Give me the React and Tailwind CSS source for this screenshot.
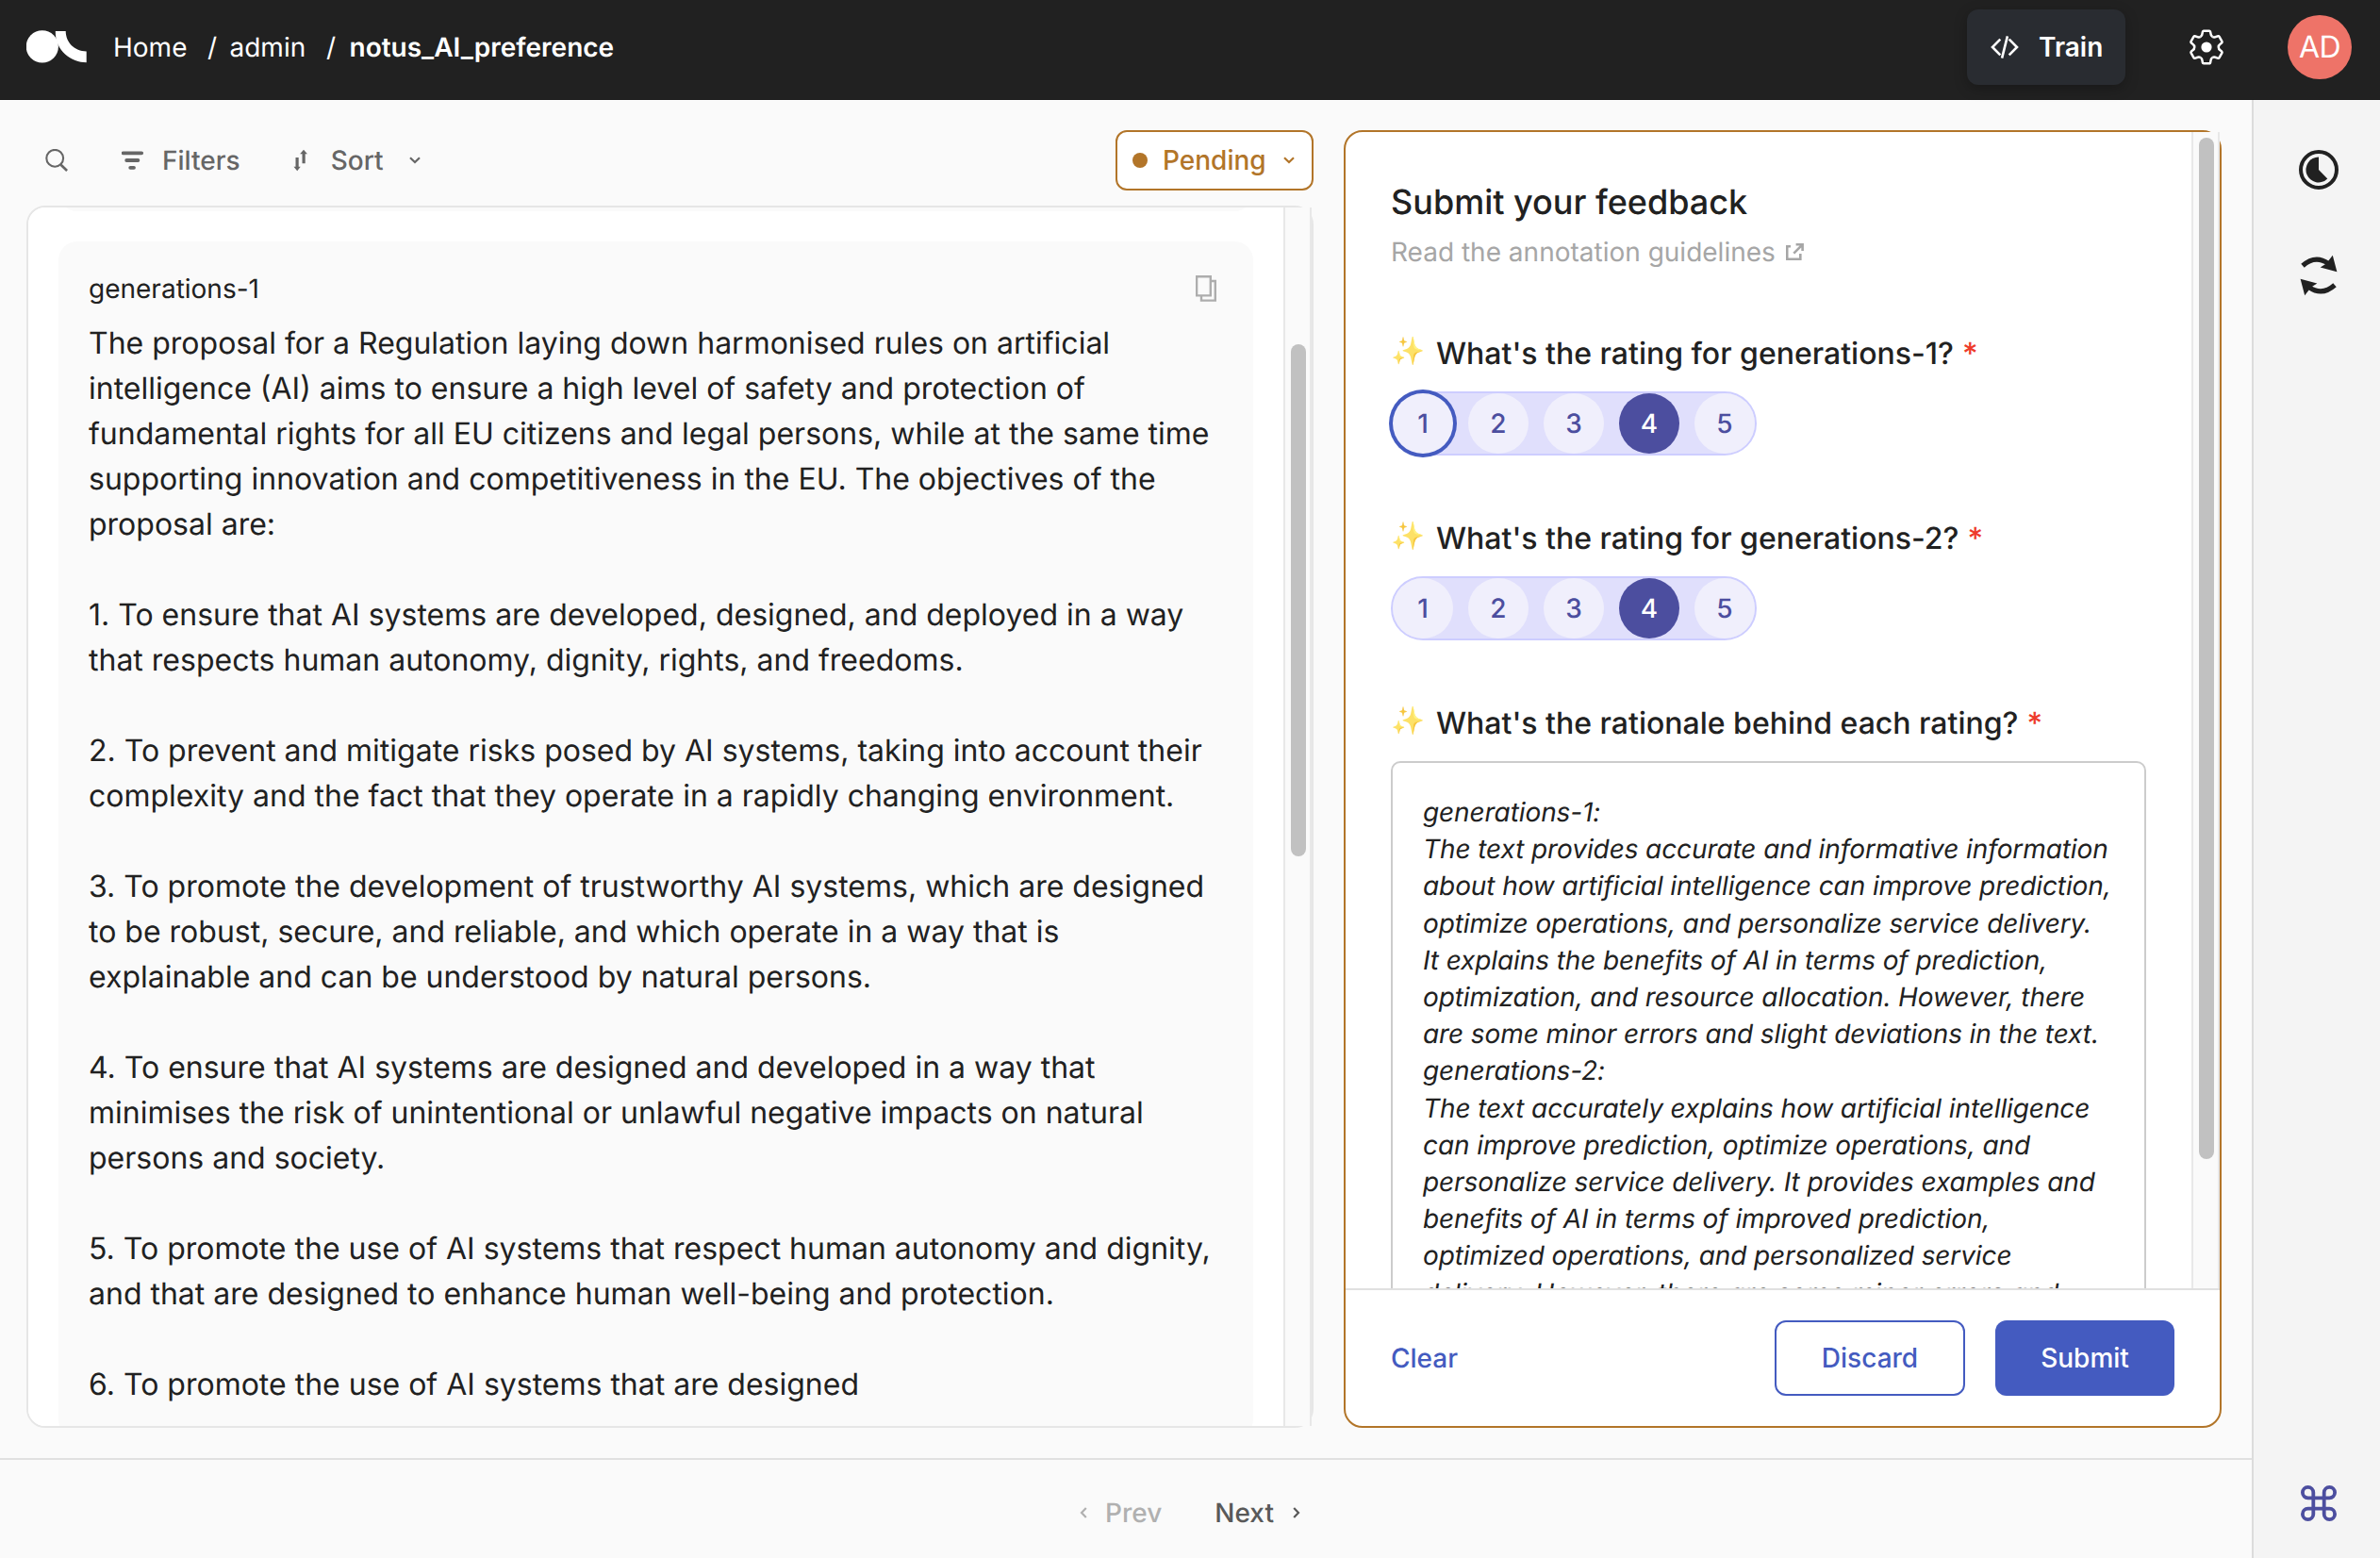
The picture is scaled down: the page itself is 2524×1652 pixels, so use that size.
import React from "react";

const paragraphs = [
  [
    "The proposal for a Regulation laying down harmonised rules on artificial",
    "intelligence (AI) aims to ensure a high level of safety and protection of",
    "fundamental rights for all EU citizens and legal persons, while at the same time",
    "supporting innovation and competitiveness in the EU. The objectives of the",
    "proposal are:",
  ],
  [
    "1. To ensure that AI systems are developed, designed, and deployed in a way",
    "that respects human autonomy, dignity, rights, and freedoms.",
  ],
  [
    "2. To prevent and mitigate risks posed by AI systems, taking into account their",
    "complexity and the fact that they operate in a rapidly changing environment.",
  ],
  [
    "3. To promote the development of trustworthy AI systems, which are designed",
    "to be robust, secure, and reliable, and which operate in a way that is",
    "explainable and can be understood by natural persons.",
  ],
  [
    "4. To ensure that AI systems are designed and developed in a way that",
    "minimises the risk of unintentional or unlawful negative impacts on natural",
    "persons and society.",
  ],
  [
    "5. To promote the use of AI systems that respect human autonomy and dignity,",
    "and that are designed to enhance human well-being and protection.",
  ],
  ["6. To promote the use of AI systems that are designed"],
];

const rationale = [
  "generations-1:",
  "The text provides accurate and informative information",
  "about how artificial intelligence can improve prediction,",
  "optimize operations, and personalize service delivery.",
  "It explains the benefits of AI in terms of prediction,",
  "optimization, and resource allocation. However, there",
  "are some minor errors and slight deviations in the text.",
  "generations-2:",
  "The text accurately explains how artificial intelligence",
  "can improve prediction, optimize operations, and",
  "personalize service delivery. It provides examples and",
  "benefits of AI in terms of improved prediction,",
  "optimized operations, and personalized service",
  "delivery. However, there are some minor errors and",
];

function Logo() {
  return (
    <svg className="mt-px h-9 w-16 shrink-0" viewBox="28 32 64 36" fill="#fff">
      <circle cx="44.8" cy="49.4" r="17.1" />
      <path d="M58.8 33H69.7C69.8 45 79 54.3 91.7 54.4V66.3C76 66 58.2 54 58.8 33Z" />
    </svg>
  );
}

function CodeIcon() {
  return (
    <svg className="h-6 w-[30px] shrink-0" viewBox="0 0 30 24" fill="none" stroke="#fff" strokeWidth="2.6">
      <path d="M10.3 3.6 2 12l8.3 8.4M19.7 3.6 28 12l-8.3 8.4M17.9.4 12.1 23.6" />
    </svg>
  );
}

const toothAngles = [0, 60, 120, 180, 240, 300];

function GearIcon() {
  return (
    <svg className="h-10 w-10 shrink-0" viewBox="-20 -20 40 40" fill="none" stroke="#fff" strokeWidth="2.5" strokeLinejoin="round">
      {toothAngles.map((a) => (
        <path
          key={a}
          transform={`rotate(${a})`}
          d="M-6.4-11C-4.8-11.9-4.5-13-4.4-14.6Q-4.2-17.3-2.8-17.3H2.8Q4.2-17.3 4.4-14.6C4.5-13 4.8-11.9 6.4-11"
        />
      ))}
      <circle r="5.6" fill="#fff" stroke="none" />
    </svg>
  );
}

function SearchIcon() {
  return (
    <svg className="h-6 w-6" viewBox="48 158 24 24" fill="none" stroke="#666">
      <circle cx="58.2" cy="167.8" r="8.9" strokeWidth="2.1" />
      <path d="m64.6 174.8 6.5 6.2" strokeWidth="2.7" />
    </svg>
  );
}

function FiltersIcon() {
  return (
    <svg className="h-6 w-6" viewBox="129 158 24 24" stroke="#666" strokeWidth="3.8" strokeLinecap="round">
      <path d="M130.6 162.3h19.6M134.2 170h12.2M138.2 177.8h3.8" />
    </svg>
  );
}

function SortIcon() {
  return (
    <svg className="h-6 w-4" viewBox="311.3 158 16 24" fill="#666">
      <path d="M322.3 158.7 326.3 163.2H324V173.3H320.8V163.2H318.4ZM315.5 181.2 311.8 176.8H313.8V167H317V176.8H319Z" />
    </svg>
  );
}

function Chevron({ className, d = "M1 1.2 6 6 11 1.2", box = "0 0 12 8", width = 2.2 }) {
  return (
    <svg className={className} viewBox={box} fill="none" stroke="currentColor" strokeWidth={width}>
      <path d={d} />
    </svg>
  );
}

function CopyIcon() {
  return (
    <svg className="h-7 w-[22px]" viewBox="0 0 22 28" fill="none" stroke="#adadad" strokeWidth="2.4">
      <path d="M1.1 1.3H15.8V21.4H1.1ZM6 21.4V26.6H20.8V6H15.8" />
    </svg>
  );
}

function ExternalIcon() {
  return (
    <svg className="h-[18px] w-[19px]" viewBox="0 0 19 18" fill="none" stroke="#a6a6a6" strokeWidth="2.6">
      <path d="M5 3.2H1.2V16.8H15.3V11M8.3 10.7 17 1.8M10.6 1.2H17.6V8" />
    </svg>
  );
}

function ThemeIcon() {
  return (
    <svg className="h-[42px] w-[42px]" viewBox="-21 -21 42 42">
      <circle r="19" fill="none" stroke="#212121" strokeWidth="4" />
      <path d="M0-13.4A13.4 13.4 0 1 0 9.3 9.5L0 0Z" fill="#212121" />
    </svg>
  );
}

function RefreshIcon() {
  const half = (
    <>
      <path d="M-17-10.3Q-3.5-22.3 10-12.6" fill="none" stroke="#212121" strokeWidth="5.2" />
      <path d="M14.8-21.2 19.4-3.8 1.7-8.6 8-12.6Z" fill="#212121" />
    </>
  );
  return (
    <svg className="h-[44px] w-[40px]" viewBox="-20 -22 40 44">
      <g>{half}</g>
      <g transform="rotate(180)">{half}</g>
    </svg>
  );
}

function CommandIcon() {
  return (
    <svg className="h-[38px] w-[38px]" viewBox="2 2 20 20" fill="none" stroke="#4c4e9f" strokeWidth="2">
      <path d="M15 6v12a3 3 0 1 0 3-3H6a3 3 0 1 0 3 3V6a3 3 0 1 0-3 3h12a3 3 0 1 0-3-3" />
    </svg>
  );
}

function Header() {
  return (
    <header className="flex h-[106px] items-start border-b border-[#1a1a1a] bg-[#212121] pl-7 pr-[30px] text-[28px] text-white">
      <div className="flex h-[99px] flex-1 items-center">
        <Logo />
        <nav className="flex items-center">
          <a className="ml-[28px] w-[100px]">Home</a>
          <span className="w-[23.5px]">/</span>
          <a className="w-[102.5px]">admin</a>
          <span className="w-[24.5px]">/</span>
          <span className="font-semibold">notus_AI_preference</span>
        </nav>
      </div>
      <div className="flex h-[100px] items-center">
        <button className="flex h-20 w-[168px] items-center rounded-[12px] bg-[#292c31] pl-[25px] font-semibold shadow-[0_4px_14px_rgba(0,0,0,0.25)]">
          <CodeIcon />
          <span className="ml-[21px]">Train</span>
        </button>
        <span className="ml-[66px]">
          <GearIcon />
        </span>
        <div className="ml-[66px] flex h-[68px] w-[68px] items-center justify-center rounded-full bg-[#ee7368] text-[32px] tracking-[-0.6px]">
          AD
        </div>
      </div>
    </header>
  );
}

function Toolbar() {
  return (
    <div className="flex h-16 items-center pl-5 text-[28px] font-medium text-[#666]">
      <SearchIcon />
      <span className="ml-[57px] flex items-center">
        <FiltersIcon />
        <span className="ml-[19px]">Filters</span>
      </span>
      <span className="ml-[56px] flex items-center">
        <SortIcon />
        <span className="ml-[24px]">Sort</span>
        <Chevron className="ml-[27.5px] h-2 w-3" />
      </span>
      <button className="ml-auto flex h-16 w-[210px] items-center rounded-[12px] border-2 border-[#b27529] bg-white pl-4 text-[#b27529]">
        <span className="h-4 w-4 rounded-full bg-[#b27529]" />
        <span className="ml-[16px]">Pending</span>
        <Chevron className="ml-[18px] h-2 w-3" />
      </button>
    </div>
  );
}

function Record() {
  return (
    <div className="mt-4 flex h-[1296px] rounded-[20px] border-2 border-[#e6e6e6] bg-white">
      <div className="min-w-0 flex-1 overflow-hidden rounded-l-[18px] bg-white px-8">
        <div className="-mt-9 h-10 rounded-[20px] bg-[#fafafa]" />
        <div className="mt-8 h-[1269px] rounded-[20px] bg-[#fafafa] pl-8 pr-[39px] pt-8 text-[#212121]">
          <div className="flex h-9 items-center justify-between text-[28px]">
            <span>generations-1</span>
            <CopyIcon />
          </div>
          <div className="mt-4 flex flex-col gap-12 whitespace-nowrap text-[32px] leading-[48px]">
            {paragraphs.map((lines, i) => (
              <p key={i}>
                {lines.map((line) => (
                  <span key={line} className="block">
                    {line}
                  </span>
                ))}
              </p>
            ))}
          </div>
        </div>
      </div>
      <div className="w-[30px] border-x-2 border-[#e8e8e8] bg-[#fafafa] pl-1.5">
        <div className="mt-[145px] h-[543px] w-4 rounded-full bg-[#c1c1c1]" />
      </div>
    </div>
  );
}

function Question({ children }) {
  return (
    <h3 className="flex h-10 items-center whitespace-nowrap text-[32px] font-medium leading-10">
      <span className="-mt-1.5 w-[48px] text-[29px] opacity-75">✨</span>
      <span>{children}</span>
      <span className="ml-[9px] text-[#ee3b2b]">*</span>
    </h3>
  );
}

function Rating({ focused }) {
  return (
    <div className="mt-5 flex h-[68px] w-[388px] gap-4 rounded-full border-2 border-[#cdcdff] bg-[#e0dffc]">
      {[1, 2, 3, 4, 5].map((n) => (
        <span
          key={n}
          className={
            "flex h-16 w-16 items-center justify-center rounded-full text-[28px] font-medium " +
            (n === 4 ? "bg-[#4c4e9f] text-white" : "bg-[#f0effc] text-[#4c4e9f]") +
            (focused && n === 1 ? " ring-4 ring-[#445bc0]" : "")
          }
        >
          {n}
        </span>
      ))}
    </div>
  );
}

function Feedback() {
  return (
    <section className="ml-8 flex h-[1376px] w-[931px] flex-col rounded-[20px] border-2 border-[#b27529] bg-white">
      <div className="flex h-[1226px] overflow-hidden rounded-tl-[18px]">
        <div className="flex-1 pl-12 pr-12 pt-[52px] text-[#212121]">
          <h2 className="h-11 text-[36px] font-medium leading-[44px]">Submit your feedback</h2>
          <p className="mt-[13px] flex h-9 items-center text-[28px] text-[#a6a6a6]">
            <span className="mr-[11px]">Read the annotation guidelines</span>
            <ExternalIcon />
          </p>
          <div className="mt-[70px]">
            <Question>What's the rating for generations-1?</Question>
            <Rating focused />
          </div>
          <div className="mt-[68px]">
            <Question>What's the rating for generations-2?</Question>
            <Rating />
          </div>
          <div className="mt-[68px]">
            <Question>What's the rationale behind each rating?</Question>
            <div className="mt-5 w-[801px] whitespace-nowrap rounded-[10px] border-2 border-[#ccc] pl-8 pt-[33px] text-[28px] italic leading-[39.2px] tracking-[-0.1px]">
              {rationale.map((line) => (
                <span key={line} className="block">
                  {line}
                </span>
              ))}
            </div>
          </div>
        </div>
        <div className="w-[30px] border-x-2 border-[#e8e8e8] bg-[#fafafa] pl-1.5">
          <div className="mt-1.5 h-[1083px] w-4 rounded-full bg-[#c1c1c1]" />
        </div>
      </div>
      <div className="flex flex-1 items-center border-t-2 border-[#e0e0e0] pl-12 pr-12 text-[28px] font-medium">
        <span className="flex-1 text-[#445bc0]">Clear</span>
        <button className="h-20 w-[202px] rounded-[12px] border-2 border-[#445bc0] text-[#445bc0]">Discard</button>
        <button className="ml-8 h-20 w-[190px] rounded-[12px] bg-[#445bc0] text-white">Submit</button>
      </div>
    </section>
  );
}

function Pagination() {
  return (
    <footer className="flex h-[106px] items-center border-t-2 border-[#e0e0e0] pl-[1145px] pt-2 text-[28px] font-medium text-[#b0b0b0]">
      <Chevron className="h-3 w-2" box="0 0 8 12" d="M6.8 1 2 6l4.8 5" />
      <span className="ml-[19px]">Prev</span>
      <span className="ml-[56px] text-[#595959]">Next</span>
      <Chevron className="ml-[20px] h-3 w-2 text-[#595959]" box="0 0 8 12" d="M1.2 1 6 6l-4.8 5" />
    </footer>
  );
}

function Sidebar() {
  return (
    <aside className="flex w-[136px] flex-col items-center border-l-2 border-[#dcdcdc] bg-[#f4f4f4] pb-[39px] pl-[4px] pt-[53px]">
      <ThemeIcon />
      <div className="mt-[69px]">
        <RefreshIcon />
      </div>
      <div className="mt-auto">
        <CommandIcon />
      </div>
    </aside>
  );
}

export default function App() {
  return (
    <div className="flex h-[1652px] w-[2524px] flex-col overflow-hidden bg-[#fafafa] font-['Inter',sans-serif] [text-rendering:geometricPrecision]">
      <Header />
      <div className="flex min-h-0 flex-1">
        <div className="flex w-[2388px] flex-col">
          <main className="flex h-[1440px] pl-7 pt-8">
            <div className="w-[1365px]">
              <Toolbar />
              <Record />
            </div>
            <Feedback />
          </main>
          <Pagination />
        </div>
        <Sidebar />
      </div>
    </div>
  );
}
